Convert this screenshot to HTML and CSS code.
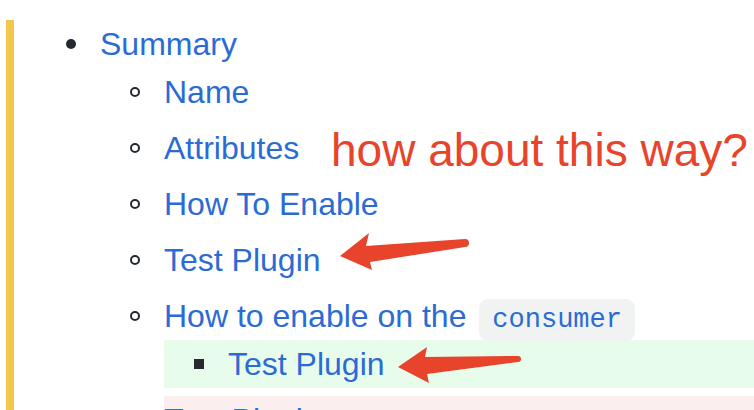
FILE: index.html
```html
<!DOCTYPE html>
<html lang="en">
<head>
<meta charset="utf-8">
<title>Summary</title>
<link rel="stylesheet" href="styles.css">
</head>
<body>
<div class="page">
  <div class="quote">
    <ul class="l1">
      <li><a href="#">Summary</a>
        <ul class="l2">
          <li><a href="#">Name</a></li>
          <li><a href="#">Attributes</a></li>
          <li><a href="#">How To Enable</a></li>
          <li><a href="#">Test Plugin</a></li>
          <li><a href="#">How to enable on the <code>consumer</code></a>
            <ul class="l3 added">
              <li><a href="#">Test Plugin</a></li>
            </ul>
          </li>
          <li class="removed"><a href="#">Test Plugin</a></li>
        </ul>
      </li>
    </ul>
  </div>
  <div class="note">how about this way?</div>
  <svg class="marks" width="754" height="410" viewBox="0 0 754 410" xmlns="http://www.w3.org/2000/svg">
    <path d="M340 256 L369 233 L366 246 L465 239 A4 4 0 0 1 465 247 L370 262 L372 270 Z" fill="#e8432b"/>
    <path d="M398 367 L427 347 L425 357 L518 356 A3 3 0 0 1 518 362 L427 374 L429 383 Z" fill="#e8432b"/>
  </svg>
</div>
</body>
</html>
```
FILE: styles.css
```css
html, body {
  margin: 0;
  padding: 0;
  overflow: hidden;
  background: #ffffff;
}
.page {
  position: relative;
  width: 754px;
  height: 410px;
  overflow: hidden;
  font-family: "Liberation Sans", Arial, sans-serif;
}
.quote {
  margin: 20px 0 0 6px;
  border-left: 8px solid #f3c74a;
  font-size: 32px;
  line-height: 48px;
  color: #24292f;
}
.quote a {
  color: #2b6bd5;
  text-decoration: none;
}
.quote ul {
  margin: 0;
  padding-left: 64px;
  list-style: none;
}
.quote ul.l1 {
  padding-left: 86px;
}
.quote li::before {
  content: "";
  display: inline-block;
  box-sizing: border-box;
  width: 10px;
  height: 10px;
  margin-left: -34px;
  margin-right: 24px;
  vertical-align: 6px;
}
.l1 > li::before {
  border-radius: 50%;
  background: #24292f;
}
.l2 > li::before {
  border-radius: 50%;
  border: 2px solid #24292f;
}
.l3 > li::before {
  background: #24292f;
}
.quote li + li {
  margin-top: 8px;
}
.added {
  background: #e8fcec;
}
.removed {
  background: #fbeeee;
}
code {
  font-family: "Liberation Mono", "DejaVu Sans Mono", monospace;
  font-size: 27px;
  line-height: 1;
  padding: 6px 13px;
  margin-left: 4px;
  border-radius: 9px;
  background: #f1f3f3;
}
.note {
  position: absolute;
  left: 331px;
  top: 127px;
  font-size: 46px;
  line-height: 1;
  color: #e8432b;
  white-space: nowrap;
}
.marks {
  position: absolute;
  left: 0;
  top: 0;
}
```
